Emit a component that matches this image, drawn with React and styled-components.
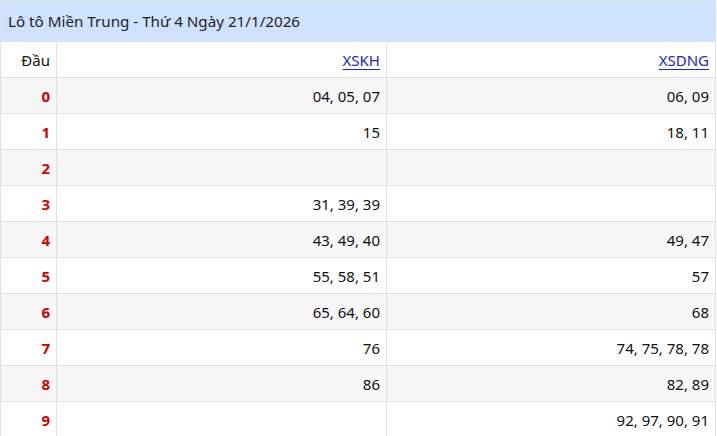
import styled, { createGlobalStyle } from 'styled-components'

const GlobalStyle = createGlobalStyle`
  body {
    margin: 0;
    background: #ffffff;
    font-family: "Noto Sans", "Liberation Sans", sans-serif;
    color: #212529;
  }
`

const Table = styled.table`
  width: 716px;
  border-collapse: collapse;
  table-layout: fixed;
  font-size: 15px;
`

const TitleCell = styled.th`
  background: #cfe2ff;
  border: 1px solid #dee2e6;
  height: 41px;
  padding: 0 7px;
  text-align: left;
  font-weight: 400;
  font-size: 15.2px;
  color: #1f2328;
  box-sizing: border-box;
`

const Row = styled.tr`
  background: ${(props) => (props.striped ? '#f7f7f7' : '#ffffff')};
`

const Cell = styled.td`
  border: 1px solid #dee2e6;
  height: 36px;
  padding: 0 6px;
  text-align: right;
  box-sizing: border-box;
  color: #111;
`

const HeadCell = styled(Cell)``

const Digit = styled(Cell)`
  color: #d40000;
  font-weight: 700;
`

const Link = styled.a`
  color: #2424c8;
  text-decoration: underline;
  text-underline-offset: 3px;
`

const rows = [
  ['04, 05, 07', '06, 09'],
  ['15', '18, 11'],
  ['', ''],
  ['31, 39, 39', ''],
  ['43, 49, 40', '49, 47'],
  ['55, 58, 51', '57'],
  ['65, 64, 60', '68'],
  ['76', '74, 75, 78, 78'],
  ['86', '82, 89'],
  ['', '92, 97, 90, 91'],
]

export default function App() {
  return (
    <>
      <GlobalStyle />
      <Table>
        <colgroup>
          <col style={{ width: 56 }} />
          <col style={{ width: 330 }} />
          <col />
        </colgroup>
        <thead>
          <tr>
            <TitleCell colSpan={3}>Lô tô Miền Trung - Thứ 4 Ngày 21/1/2026</TitleCell>
          </tr>
        </thead>
        <tbody>
          <Row>
            <HeadCell>Đầu</HeadCell>
            <HeadCell>
              <Link href="#">XSKH</Link>
            </HeadCell>
            <HeadCell>
              <Link href="#">XSDNG</Link>
            </HeadCell>
          </Row>
          {rows.map((r, i) => (
            <Row key={i} striped={i % 2 === 0}>
              <Digit>{i}</Digit>
              <Cell>{r[0]}</Cell>
              <Cell>{r[1]}</Cell>
            </Row>
          ))}
        </tbody>
      </Table>
    </>
  )
}
